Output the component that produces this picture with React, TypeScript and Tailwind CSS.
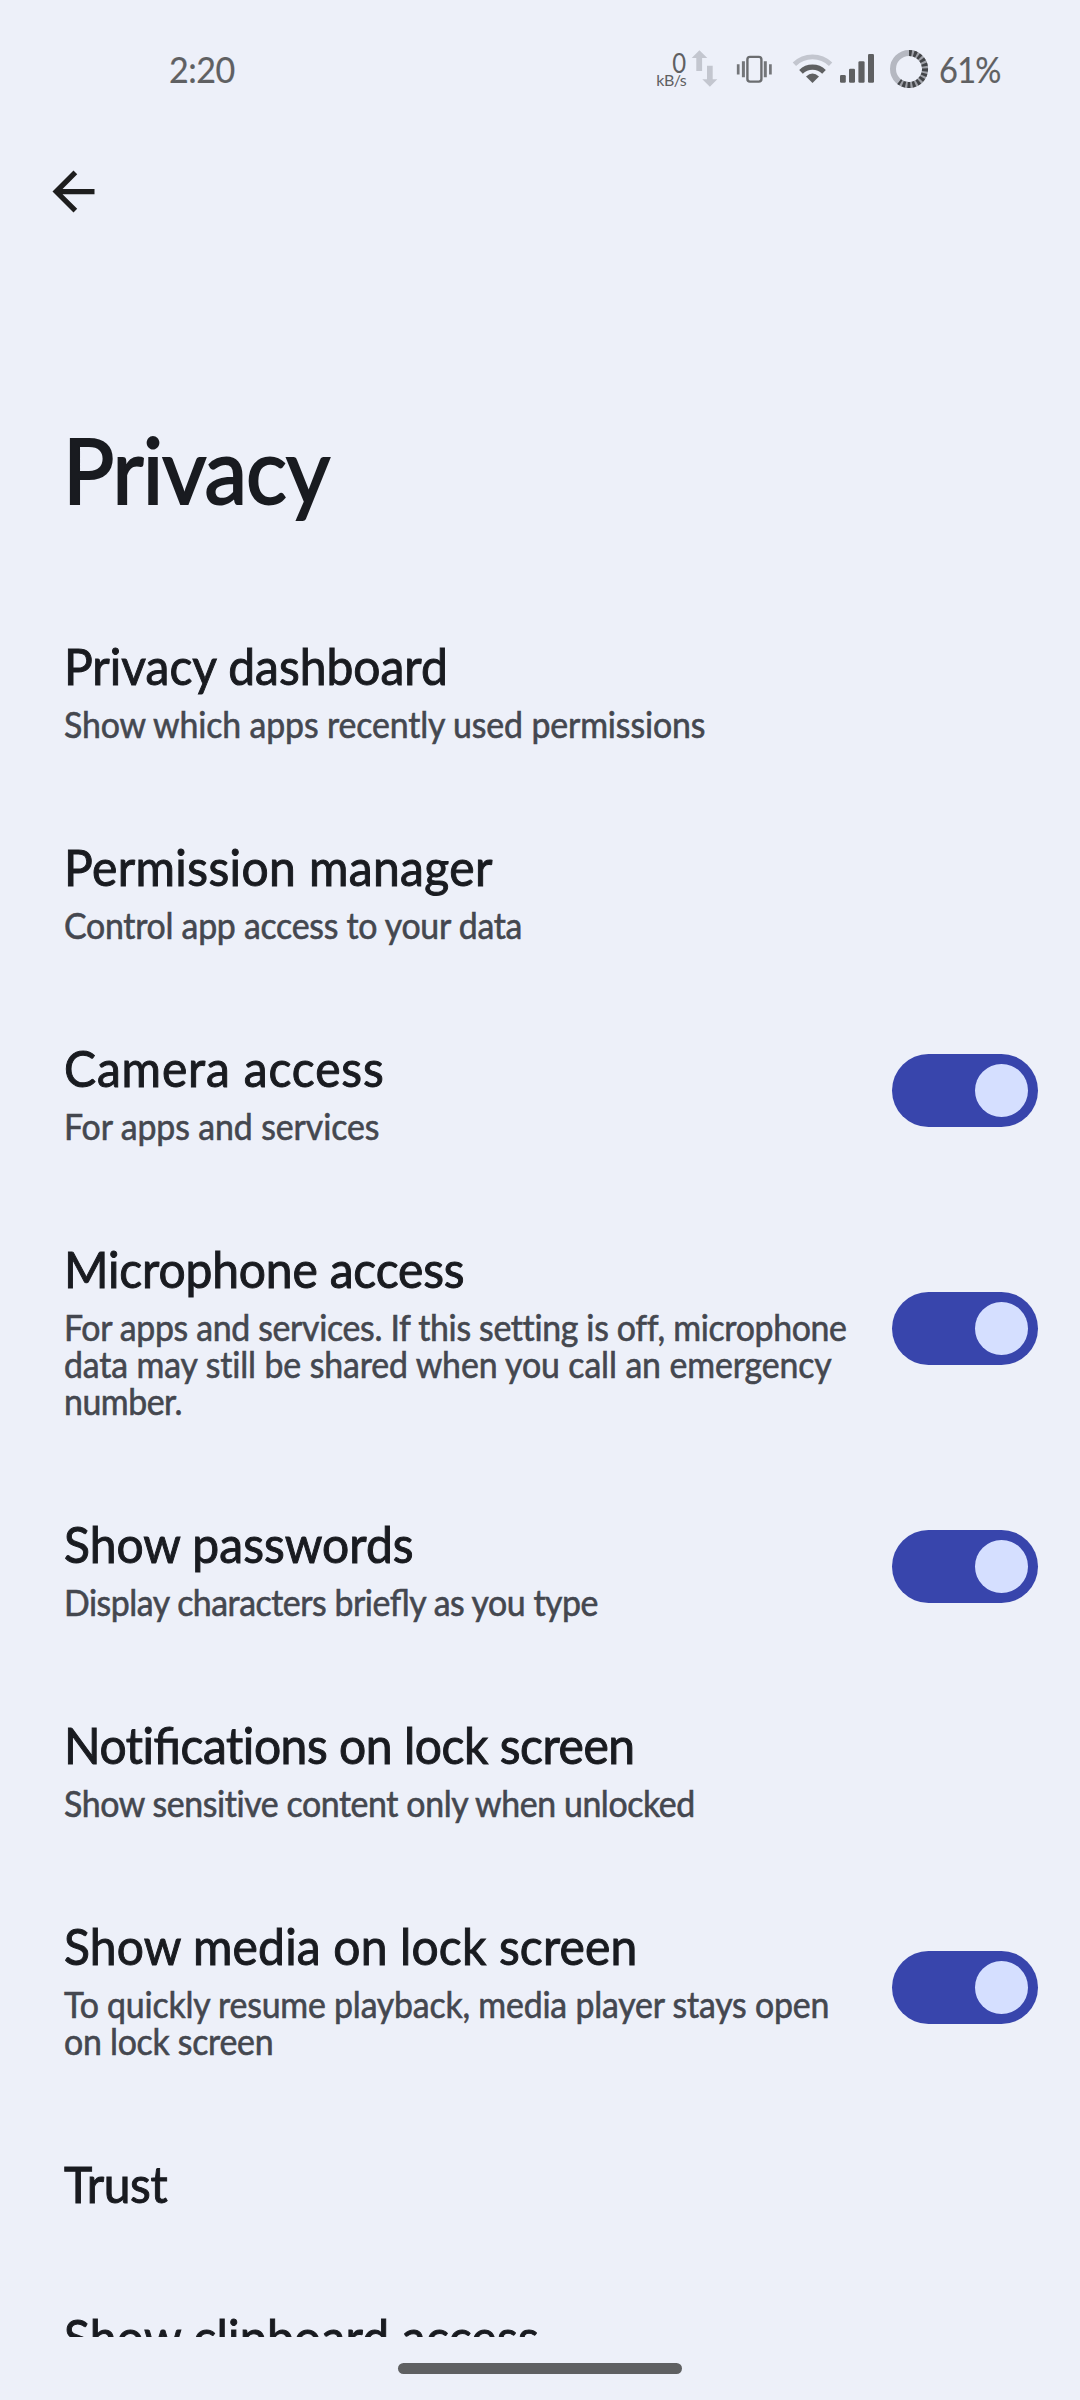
import React from "react";

type Item = {
  title: string;
  titleClass: string;
  lines?: { text: string; cls: string }[];
  toggle?: boolean;
};

const ITEMS: Item[] = [
  {
    title: "Privacy dashboard",
    titleClass: "tracking-[0.02px]",
    lines: [{ text: "Show which apps recently used permissions", cls: "tracking-[-0.14px]" }],
  },
  {
    title: "Permission manager",
    titleClass: "tracking-[0.43px]",
    lines: [{ text: "Control app access to your data", cls: "tracking-[-0.28px]" }],
  },
  {
    title: "Camera access",
    titleClass: "tracking-[0.92px]",
    lines: [{ text: "For apps and services", cls: "tracking-[-0.1px]" }],
    toggle: true,
  },
  {
    title: "Microphone access",
    titleClass: "tracking-[-0.16px]",
    lines: [
      { text: "For apps and services. If this setting is off, microphone", cls: "tracking-[-0.35px]" },
      { text: "data may still be shared when you call an emergency", cls: "tracking-[-0.12px]" },
      { text: "number.", cls: "tracking-[-0.49px]" },
    ],
    toggle: true,
  },
  {
    title: "Show passwords",
    titleClass: "tracking-[0.05px]",
    lines: [{ text: "Display characters briefly as you type", cls: "tracking-[-0.49px]" }],
    toggle: true,
  },
  {
    title: "Notifications on lock screen",
    titleClass: "tracking-[-0.47px]",
    lines: [{ text: "Show sensitive content only when unlocked", cls: "tracking-[-0.42px]" }],
  },
  {
    title: "Show media on lock screen",
    titleClass: "tracking-[0.19px]",
    lines: [
      { text: "To quickly resume playback, media player stays open", cls: "tracking-[-0.21px]" },
      { text: "on lock screen", cls: "tracking-[-0.28px]" },
    ],
    toggle: true,
  },
  { title: "Trust", titleClass: "tracking-[-0.4px]" },
  { title: "Show clipboard access", titleClass: "tracking-[0.26px]" },
];

/** Joins only the f-ligatures; every other pair stays separate. */
function Ligated({ text }: { text: string }) {
  return (
    <>
      {text.split(/(fi|fl)/).map((part, i) =>
        i % 2 ? (
          <span key={i} className="[font-feature-settings:'liga'_1]">
            {part}
          </span>
        ) : (
          part
        ),
      )}
    </>
  );
}

function StatusBar() {
  return (
    <header className="flex h-[90px] items-start pt-[48px] pl-[169px] text-[#5f6062]">
      <div className="w-[487px] text-[37px] leading-[42px] tracking-[-0.55px]">
        <span className="inline-block origin-left scale-x-[0.92] [-webkit-text-stroke:0.2px_#5f6062]">2:20</span>
      </div>
      <div className="flex w-[30px] flex-col items-end pt-[5px]">
        <span className="origin-right scale-x-[0.92] text-[26px] leading-[20px]">0</span>
        <span className="text-[16px] leading-[14px] tracking-[-0.6px]">kB/s</span>
      </div>
      <svg className="ml-[4px]" width="30" height="42" viewBox="690 48 30 42" fill="#c3c6cf">
        <path d="M699.4 50.3l7.9 7.6h-5.2V71h-5.8V57.9h-4.6z" />
        <path d="M709.9 86.7l-7.6-7.4h4.7V65.7h5.7v13.6h4.6z" />
      </svg>
      <svg className="ml-[15px]" width="39" height="42" viewBox="735 48 39 42">
        <rect x="747.4" y="56.9" width="14" height="24.7" rx="2.6" fill="none" stroke="#6b6d70" strokeWidth="2.4" />
        <path d="M743.4 61.3v16M765.3 61.3v16" stroke="#74767a" strokeWidth="3" />
        <path d="M738.2 64.2v10.3M770.4 64.2v10.3" stroke="#74767a" strokeWidth="2.7" />
      </svg>
      <svg className="ml-[17px]" width="43" height="42" viewBox="791 48 43 42" fill="none">
        <path d="M794.4 64.3a26 26 0 0 1 36.2 0" stroke="#c3c6cf" strokeWidth="4.8" />
        <path d="M801 71.8a16.5 16.5 0 0 1 23 0" stroke="#5f6062" strokeWidth="5.2" />
        <path d="M806 76.6q6.5-6.4 13 0l-6.5 6.3z" fill="#5f6062" />
      </svg>
      <svg className="ml-[4px]" width="38" height="42" viewBox="838 48 38 42" fill="#5f6062">
        <rect x="840" y="75" width="5.8" height="7.8" rx="1.3" />
        <rect x="849" y="68.7" width="6" height="14.1" rx="1.3" />
        <rect x="858.4" y="61.3" width="6.2" height="21.5" rx="1.3" />
        <rect x="868" y="54" width="6" height="28.8" rx="1.3" />
      </svg>
      <svg className="ml-[13px]" width="40" height="42" viewBox="889 48 40 42" fill="none" strokeWidth="6">
        <circle cx="909" cy="69" r="16" stroke="#b5b8c1" />
        <path d="M909 53a16 16 0 1 1-9.85 28.6" stroke="#9fa1a8" />
        <path d="M909 53a16 16 0 1 1-9.85 28.6" stroke="#424448" strokeDasharray="2.8 2.05" />
      </svg>
      <span className="ml-[10px] inline-block origin-left scale-x-[0.88] text-[37px] leading-[42px] tracking-[-0.8px] [-webkit-text-stroke:0.2px_#5f6062]">
        61%
      </span>
    </header>
  );
}

function Toggle() {
  return (
    <div className="flex h-[73px] w-[146px] shrink-0 items-center justify-end rounded-full bg-[#3845ac] pr-[10px]">
      <div className="size-[53px] rounded-full bg-[#d5dfff]" />
    </div>
  );
}

export default function App() {
  return (
    <div className="flex h-[2400px] w-[1080px] flex-col overflow-hidden bg-[#edf0f9] font-[Lato,sans-serif] whitespace-nowrap text-[#191b20] [font-feature-settings:'liga'_0]">
      <StatusBar />
      <svg className="mt-[70px] ml-[41.5px] shrink-0" width="63" height="63" viewBox="0 0 24 24" fill="#1e1e1e">
        <path d="M20 11H7.83l5.59-5.59L12 4l-8 8 8 8 1.41-1.41L7.83 13H20z" />
      </svg>
      <h1 className="mt-[191px] h-[110px] w-fit shrink-0 origin-left scale-x-[0.94] pl-[67px] text-[91px] leading-[110px] tracking-[-1.04px] [-webkit-text-stroke:2px_#191b20]">
        Privacy
      </h1>
      <main className="mt-[64px] h-[1749px] shrink-0 overflow-hidden">
        {ITEMS.map((item) => (
          <section key={item.title} className="flex items-center justify-between pt-[49px] pr-[42px] pb-[46px] pl-[64px]">
            <div className="origin-left scale-x-[0.94]">
              <h2 className={`text-[51px] leading-[58px] [-webkit-text-stroke:1px_#191b20] ${item.titleClass}`}>
                <Ligated text={item.title} />
              </h2>
              {item.lines && (
                <div className="mt-[11px] text-[36px] leading-[37px] text-[#44474f] [-webkit-text-stroke:0.6px_#44474f]">
                  {item.lines.map((line) => (
                    <p key={line.text} className={line.cls}>
                      <Ligated text={line.text} />
                    </p>
                  ))}
                </div>
              )}
            </div>
            {item.toggle && (
              <div className="mb-[3px] -ml-[60px]">
                <Toggle />
              </div>
            )}
          </section>
        ))}
      </main>
      <div className="mx-auto mt-[26px] h-[11px] w-[284px] shrink-0 rounded-full bg-[#5f6062]" />
    </div>
  );
}
